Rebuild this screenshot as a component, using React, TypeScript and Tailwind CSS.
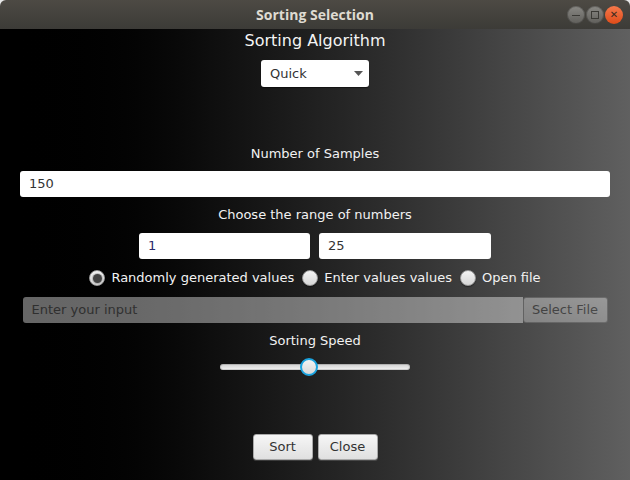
import { useState } from 'react';

function Radio({ checked, label }: { checked?: boolean; label: string }) {
  return (
    <label className="flex items-center gap-[6px]">
      <span className="relative flex h-[16px] w-[16px] items-center justify-center rounded-full border border-[#9a9a9a] bg-gradient-to-b from-[#f4f4f4] to-[#d6d6d6] shadow-[0_1px_1px_rgba(0,0,0,0.4)]">
        {checked && <span className="h-[9px] w-[9px] rounded-full bg-[#444] shadow-[0_0_1px_1px_rgba(0,0,0,0.2)]" />}
      </span>
      <span className="text-[#f2f2f2]">{label}</span>
    </label>
  );
}

function Button({ children }: { children: string }) {
  return (
    <button className="h-[26px] w-[60px] rounded-[3px] border border-[#a9a9a9] bg-gradient-to-b from-[#f6f6f6] to-[#e0e0e0] text-[13px] text-[#333] shadow-[0_1px_0_rgba(255,255,255,0.15)]">
      {children}
    </button>
  );
}

export default function App() {
  const [speed] = useState(47);

  return (
    <div className="h-[480px] w-[630px] overflow-hidden bg-[#e8e8e8] font-['DejaVu_Sans',sans-serif] text-[13px]">
      <div className="flex h-full flex-col overflow-hidden rounded-t-[6px]">
        {/* title bar */}
        <div className="relative flex h-[29px] shrink-0 items-center justify-center bg-gradient-to-b from-[#4d4a44] to-[#3c3b37]">
          <span className="font-['Open_Sans',sans-serif] text-[14px] font-bold text-[#dfdbd2]">Sorting Selection</span>
          <div className="absolute right-[7px] top-[6px] flex gap-[1px]">
            <span className="flex h-[18px] w-[18px] items-center justify-center rounded-full bg-gradient-to-b from-[#8a8985] to-[#5f5e5a] shadow-[inset_0_0_0_1px_rgba(0,0,0,0.25)]">
              <span className="h-[1px] w-[8px] bg-[#3a3935]" />
            </span>
            <span className="flex h-[18px] w-[18px] items-center justify-center rounded-full bg-gradient-to-b from-[#8a8985] to-[#5f5e5a] shadow-[inset_0_0_0_1px_rgba(0,0,0,0.25)]">
              <span className="h-[8px] w-[8px] border border-[#3a3935]" />
            </span>
            <span className="flex h-[18px] w-[18px] items-center justify-center rounded-full bg-gradient-to-b from-[#f5784a] to-[#df4b16] text-[10px] leading-none text-[#3a2a20]">
              ✕
            </span>
          </div>
        </div>

        {/* content */}
        <div className="flex flex-1 flex-col items-center bg-gradient-to-r from-[#000000] to-[#606060]">
          <div className="mt-[1px] h-[22px] text-[16px] leading-[22px] text-[#f4f4f4]">Sorting Algorithm</div>

          <div className="mt-[8px] flex h-[27px] w-[108px] items-center justify-between rounded-[3px] bg-white pl-[9px] pr-[6px] text-[#333] shadow-[0_1px_1px_rgba(0,0,0,0.5)]">
            <span>Quick</span>
            <svg width="9" height="5" viewBox="0 0 9 5">
              <path d="M0 0h9L4.5 5z" fill="#555" />
            </svg>
          </div>

          <div className="mt-[58px] h-[18px] leading-[18px] text-[#f2f2f2]">Number of Samples</div>
          <div className="mt-[8px] flex h-[26px] w-[590px] items-center rounded-[3px] bg-white px-[9px] text-[#333]">150</div>

          <div className="mt-[9px] h-[18px] leading-[18px] text-[#f2f2f2]">Choose the range of numbers</div>
          <div className="mt-[9px] flex gap-[9px]">
            <div className="flex h-[26px] w-[171px] items-center rounded-[3px] bg-white px-[9px] text-[#2b2b6b]">1</div>
            <div className="flex h-[26px] w-[172px] items-center rounded-[3px] bg-white px-[9px] text-[#333]">25</div>
          </div>

          <div className="mt-[10px] flex h-[18px] items-center gap-[8px] leading-[18px]">
            <Radio checked label="Randomly generated values" />
            <Radio label="Enter values values" />
            <Radio label="Open file" />
          </div>

          <div className="mt-[10px] flex h-[26px] w-[585px] opacity-40">
            <div className="flex flex-1 items-center rounded-l-[3px] bg-white px-[9px] text-[#777]">Enter your input</div>
            <div className="flex w-[85px] items-center justify-center rounded-[3px] border border-[#888] bg-gradient-to-b from-[#f4f4f4] to-[#dcdcdc] text-[#333]">
              Select File
            </div>
          </div>

          <div className="mt-[9px] h-[18px] leading-[18px] text-[#f2f2f2]">Sorting Speed</div>
          <div className="relative mt-[8px] flex h-[18px] w-[190px] items-center">
            <div className="h-[6px] w-full rounded-full bg-gradient-to-b from-[#cfcfcf] to-[#f4f4f4] shadow-[inset_0_0_0_1px_rgba(0,0,0,0.15)]" />
            <div
              className="absolute top-0 h-[18px] w-[18px] rounded-full border-2 border-[#1aa3df] bg-gradient-to-b from-[#f4f4f4] to-[#d8d8d8]"
              style={{ left: `calc(${speed}% - 9px)` }}
            />
          </div>

          <div className="mt-[58px] flex gap-[5px]">
            <Button>Sort</Button>
            <Button>Close</Button>
          </div>
        </div>
      </div>
    </div>
  );
}
